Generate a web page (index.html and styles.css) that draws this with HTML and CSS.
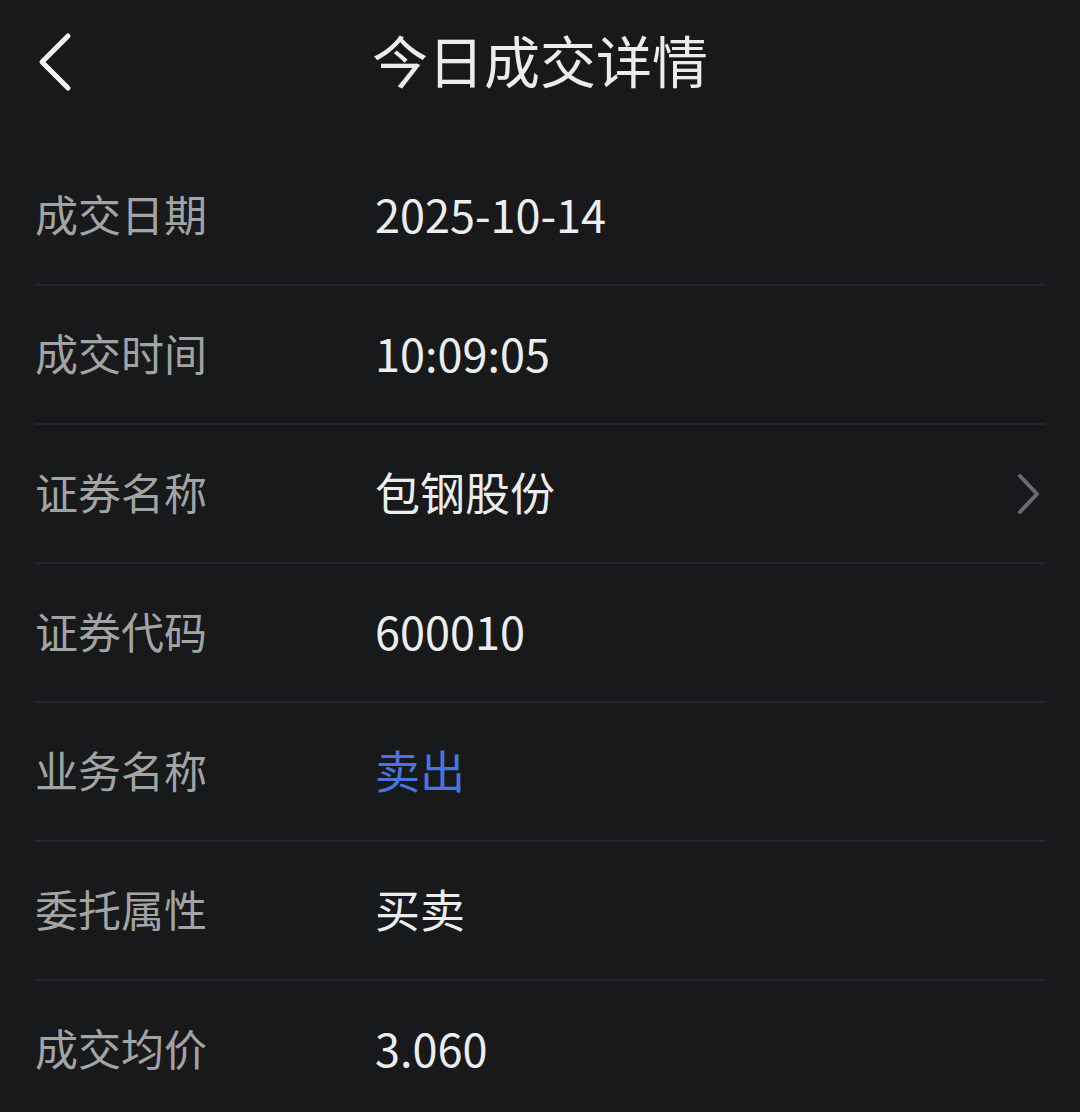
FILE: index.html
```html
<!DOCTYPE html>
<html lang="zh-CN">
<head>
    <meta charset="UTF-8">
    <meta name="viewport" content="width=device-width, initial-scale=1.0">
    <title>今日成交详情</title>
    <link rel="stylesheet" href="styles.css">
</head>
<body>
    <div class="page">
        <header class="topbar">
            <a class="back" href="#">
                <svg width="40" height="64" viewBox="0 0 40 64">
                    <polyline points="30,4 4,30 30,56" fill="none" stroke="#f2f2f2" stroke-width="5" stroke-linecap="round" stroke-linejoin="round"/>
                </svg>
            </a>
            <h1 class="title">今日成交详情</h1>
        </header>
        <ul class="details">
            <li class="row">
                <span class="label">成交日期</span>
                <span class="value">2025-10-14</span>
            </li>
            <li class="row">
                <span class="label">成交时间</span>
                <span class="value">10:09:05</span>
            </li>
            <li class="row">
                <span class="label">证券名称</span>
                <span class="value">包钢股份</span>
                <svg class="arrow" width="28" height="44" viewBox="0 0 28 44">
                    <polyline points="6,4 23,22 6,40" fill="none" stroke="#686b72" stroke-width="4" stroke-linecap="round" stroke-linejoin="round"/>
                </svg>
            </li>
            <li class="row">
                <span class="label">证券代码</span>
                <span class="value">600010</span>
            </li>
            <li class="row">
                <span class="label">业务名称</span>
                <span class="value sell">卖出</span>
            </li>
            <li class="row">
                <span class="label">委托属性</span>
                <span class="value">买卖</span>
            </li>
            <li class="row">
                <span class="label">成交均价</span>
                <span class="value">3.060</span>
            </li>
        </ul>
    </div>
</body>
</html>
```

FILE: styles.css
```css
body {
    margin: 0;
    background-color: #18191b;
    font-family: "Noto Sans CJK SC", "Noto Sans", sans-serif;
    color: #ececec;
}
.page {
    width: 1080px;
    height: 1112px;
    overflow: hidden;
}
.topbar {
    position: relative;
    height: 127px;
    display: flex;
    align-items: center;
    justify-content: center;
    margin-bottom: 20px;
}
.back {
    position: absolute;
    left: 38px;
    top: 32px;
    display: block;
    width: 40px;
    height: 64px;
}
.back svg {
    display: block;
}
.title {
    margin: -9px 0 0;
    font-size: 56px;
    font-weight: 400;
    color: #ececec;
    line-height: 1;
}
.details {
    list-style: none;
    margin: 0;
    padding: 0 35px;
}
.row {
    display: flex;
    align-items: center;
    height: 132px;
    padding-bottom: 5px;
    border-bottom: 2px solid #26272a;
}
.label {
    width: 340px;
    font-size: 43px;
    color: #a3a3a3;
}
.value {
    flex: 1;
    font-size: 45px;
    color: #ededed;
}
.value.sell {
    color: #4a76dc;
}
.arrow {
    display: block;
    margin-right: 3px;
    margin-top: 5px;
}
```
